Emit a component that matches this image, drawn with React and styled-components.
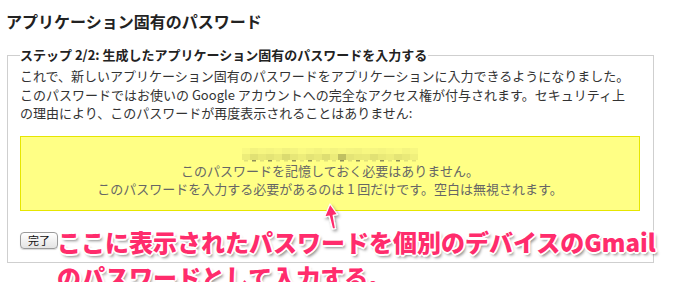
import React from "react";
import styled, { createGlobalStyle } from "styled-components";

const Global = createGlobalStyle`
  html, body { margin: 0; padding: 0; background: #fff; }
  body { font-family: "Noto Sans CJK JP", "Liberation Sans", sans-serif; color: #333; overflow: hidden; }
`;

const Page = styled.div`
  position: relative;
  width: 681px;
  height: 282px;
  padding: 11px 0 0 7px;
  box-sizing: border-box;
`;

const Title = styled.h2`
  margin: 0 0 16px -1px;
  font-size: 16px;
  line-height: 20px;
  font-weight: 700;
  color: #222;
`;

const Step = styled.fieldset`
  box-sizing: border-box;
  width: 647px;
  margin: 0;
  padding: 4px 13px 12px 12px;
  border: 1px solid #cfcfcf;
`;

const StepLegend = styled.legend`
  padding: 0 1px 0 0;
  font-size: 13px;
  line-height: 16px;
  font-weight: 700;
  color: #222;
`;

const Intro = styled.p`
  margin: 0 0 13px;
  font-size: 13px;
  line-height: 18.5px;
  color: #333;
`;

const PasswordBox = styled.div`
  background: #ffff85;
  border: 1px solid #e6e600;
  padding: 11px 0 12px;
  display: flex;
  flex-direction: column;
  align-items: center;
`;

const Hint = styled.div`
  font-size: 13px;
  line-height: 18px;
  color: #666;
  text-align: center;
`;

const DoneButton = styled.button`
  margin-top: 21px;
  width: 38px;
  height: 17px;
  padding: 0;
  font-family: "Noto Sans CJK JP", sans-serif;
  font-size: 11px;
  line-height: 15px;
  color: #111;
  border: 1px solid #9a9a9a;
  border-radius: 4px;
  background: linear-gradient(#ffffff, #e4e4e4);
  box-shadow: 0 1px 1px rgba(0,0,0,0.15);
`;

const Annotation = styled.div`
  position: absolute;
  left: 57px;
  top: 224px;
  white-space: nowrap;
  font-size: 24px;
  line-height: 35px;
  font-weight: 900;
  color: #ff2c6c;
  text-shadow:
    -1px -1px 0 #fff, 1px -1px 0 #fff, -1px 1px 0 #fff, 1px 1px 0 #fff,
    0 -2px 0 #fff, 0 2px 0 #fff, -2px 0 0 #fff, 2px 0 0 #fff,
    2px 3px 3px rgba(0,0,0,0.45);
`;

const ArrowSvg = styled.svg`
  position: absolute;
  left: 320px;
  top: 200px;
  overflow: visible;
`;

const mosaicTop = [0.04,0.08,0.06,0.07,0.05,0.09,0.07,0.04,0.06,0.08,0.05,0.07,0.05,0.07,0.08,0.05,0.06,0.07,0.05,0.04,0.07,0.05];
const mosaicBot = [0.12,0.2,0.15,0.18,0.14,0.24,0.16,0.12,0.18,0.15,0.22,0.13,0.42,0.18,0.15,0.14,0.2,0.15,0.12,0.18,0.15,0.1];
const dots = [0,1,0,1,0,0,1,0,1,0,0,0,1,0,1,0,0,1,0,1,0,0];

function Mosaic() {
  const w = 8;
  return (
    <svg width={mosaicTop.length * w} height="14" viewBox={`0 0 ${mosaicTop.length * w} 14`}>
      {mosaicTop.map((a, i) => (
        <rect key={"t" + i} x={i * w} y="0" width={w} height="6" fill="#6a6a40" opacity={a} />
      ))}
      {mosaicBot.map((a, i) => (
        <rect key={"b" + i} x={i * w} y="6" width={w} height="6" fill="#6a6a30" opacity={a} />
      ))}
      {dots.map((d, i) => (
        <rect key={"d" + i} x={i * w + 2} y="12" width={4} height="1.5" fill="#333" opacity={d ? 0.55 : 0.15} />
      ))}
    </svg>
  );
}

export default function App() {
  return (
    <Page>
      <Global />
      <Title>アプリケーション固有のパスワード</Title>
      <Step>
        <StepLegend>ステップ 2/2: 生成したアプリケーション固有のパスワードを入力する</StepLegend>
        <Intro>
          これで、新しいアプリケーション固有のパスワードをアプリケーションに入力できるようになりました。
          <br />
          このパスワードではお使いの Google アカウントへの完全なアクセス権が付与されます。セキュリティ上
          <br />
          の理由により、このパスワードが再度表示されることはありません:
        </Intro>
        <PasswordBox>
          <Mosaic />
          <Hint>このパスワードを記憶しておく必要はありません。</Hint>
          <Hint>このパスワードを入力する必要があるのは 1 回だけです。空白は無視されます。</Hint>
        </PasswordBox>
        <DoneButton type="button">完了</DoneButton>
      </Step>
      <ArrowSvg width="24" height="34" viewBox="0 0 24 34">
        <defs>
          <filter id="ash" x="-50%" y="-50%" width="200%" height="200%">
            <feDropShadow dx="1.5" dy="2" stdDeviation="1.5" floodColor="#000" floodOpacity="0.4" />
          </filter>
        </defs>
        <g filter="url(#ash)">
          <path d="M10 4 L4.5 17 L9.2 16 L12.5 29 L15.5 28.5 L13.2 15.3 L17.5 14.5 Z" fill="#ff2c6c" stroke="#fff" strokeWidth="1.2" strokeLinejoin="round" />
        </g>
      </ArrowSvg>
      <Annotation>
        ここに表示されたパスワードを個別のデバイスのGmail
        <br />
        のパスワードとして入力する。
      </Annotation>
    </Page>
  );
}
